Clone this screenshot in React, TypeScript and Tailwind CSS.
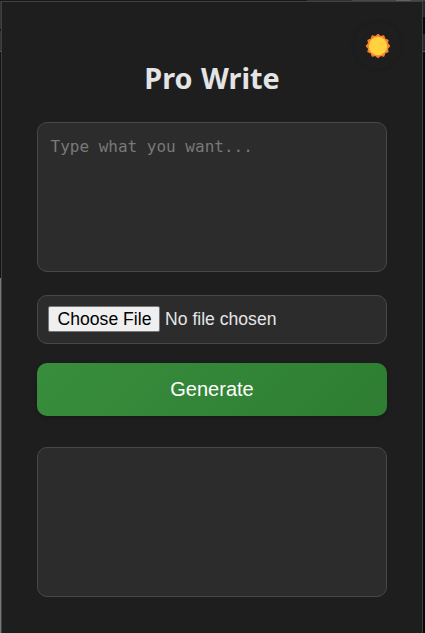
import React from "react";

function SunIcon() {
  const points = Array.from({ length: 24 }, (_, i) => {
    const a = (i * Math.PI) / 12;
    const r = i % 2 === 0 ? 11.6 : 9.7;
    return `${r * Math.sin(a)},${-r * Math.cos(a)}`;
  }).join(" ");
  return (
    <svg width="26" height="26" viewBox="-13 -13 26 26" aria-hidden="true">
      <polygon points={points} fill="#fb832e" stroke="#fb832e" strokeWidth="1.2" strokeLinejoin="round" />
      <circle r="9.2" fill="#ffd23e" />
    </svg>
  );
}

export default function App() {
  return (
    <div className="relative flex h-[633px] w-[425px] overflow-hidden bg-[#1e1e1e] font-['Liberation_Sans',sans-serif]">
      <div className="flex w-px shrink-0 flex-col">
        <div className="h-[29px] bg-[#333636]" />
        <div className="h-[2px] bg-[#111314]" />
        <div className="h-[20px] bg-[#333636]" />
        <div className="h-px bg-[#5a5d5d]" />
        <div className="h-[226px] bg-[#111314]" />
        <div className="grow bg-[#777a7a]" />
      </div>
      <main className="mt-px flex w-[422px] shrink-0 flex-col border border-b-0 border-[#3e4143] px-[35px]">
        <h1 className="mt-[56px] h-[40px] w-[350px] text-center font-['Noto_Sans',sans-serif] text-[28.8px] leading-[39px] font-bold [word-spacing:1px] text-[#e4e4e4]">
          Pro Write
        </h1>
        <textarea
          placeholder="Type what you want..."
          className="mt-[24px] block h-[150px] w-[350px] resize-none rounded-[10px] border border-[#484848] bg-[#2c2c2c] px-[12.5px] py-[12px] font-['DejaVu_Sans_Mono',monospace] text-[16px] leading-[24px] text-[#e0e0e0] outline-none placeholder:text-[#797979]"
        />
        <div className="mt-[23px] flex h-[49px] w-[350px] items-center rounded-[10px] border border-[#484848] bg-[#2c2c2c] pb-px pl-[10px] text-[17.6px]">
          <button className="h-[26px] w-[112px] rounded-[2px] border border-[#767676] bg-[#efefef] pl-px text-center leading-[23px] whitespace-nowrap text-black">
            Choose File
          </button>
          <span className="ml-[5px] pb-px leading-[24px] text-[#e6e6e6]">No file chosen</span>
        </div>
        <button className="mt-[19px] h-[53px] w-[350px] shrink-0 rounded-[10px] bg-linear-135 from-[#388e3c] to-[#2e7d32] pb-[2px] text-[20px] text-white shadow-[0_2px_5px_rgba(0,0,0,0.2)]">
          Generate
        </button>
        <div className="mt-[31px] h-[150px] w-[350px] shrink-0 rounded-[10px] border border-[#484848] bg-[#2c2c2c]" />
      </main>
      <div className="flex grow flex-col">
        <div className="h-[17px] bg-[#24282a]" />
        <div className="h-[17px] bg-[#050708]" />
        <div className="h-[17px] bg-[#24282a]" />
        <div className="h-px bg-[#5a5d5d]" />
        <div className="grow bg-[#050708]" />
      </div>
      <div className="absolute inset-x-0 top-0 flex h-px bg-[#17191d]">
        <div className="ml-[307px] w-[45px] bg-[#303234]" />
        <div className="w-[44px] bg-[#44474a]" />
        <div className="w-[15px] bg-[#5f6264]" />
        <div className="grow bg-[#44474a]" />
      </div>
      <button
        aria-label="Toggle theme"
        className="absolute top-[22px] left-[354px] flex size-[47px] items-center justify-center rounded-full bg-[#1e1e1e] shadow-[0_0_4px_rgba(0,0,0,0.15)]"
      >
        <SunIcon />
      </button>
    </div>
  );
}
